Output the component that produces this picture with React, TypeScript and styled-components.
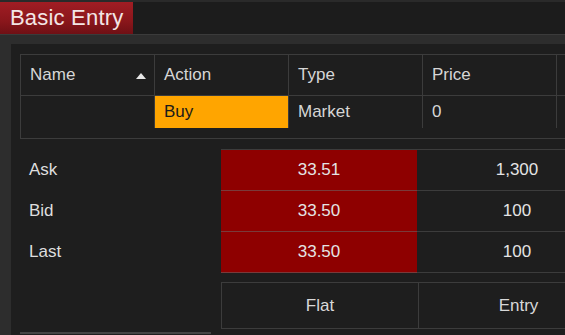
import React from 'react';
import styled, { createGlobalStyle } from 'styled-components';

const GlobalStyle = createGlobalStyle`
  html, body {
    margin: 0;
    padding: 0;
    overflow: hidden;
    background: #1c1c1c;
    font-family: "Liberation Sans", Arial, sans-serif;
  }
`;

const Page = styled.div`
  width: 565px;
  height: 335px;
  overflow: hidden;
  display: flex;
  flex-direction: column;
  background: #1c1c1c;
`;

const TitleBar = styled.div`
  flex-shrink: 0;
  height: 32px;
  border-top: 2px solid #2a2a2a;
  display: flex;
`;

const Tab = styled.div`
  width: 123px;
  padding-left: 10px;
  display: flex;
  align-items: center;
  background: linear-gradient(#a11d24, #8a161b 60%, #6f1015);
  color: #f3e6e6;
  font-size: 22px;
  letter-spacing: 0.2px;
`;

const Frame = styled.div`
  flex: 1 0 auto;
  border-top: 1px solid #3b3b3b;
  background: #2d2d2d;
  padding: 9px 0 0 11px;
  display: flex;
`;

const Panel = styled.div`
  flex: 1;
  background: #1e1e1e;
  padding: 10px 0 0 9px;
  display: flex;
  flex-direction: column;
`;

const OrderTable = styled.div`
  width: 640px;
  height: 83px;
  border: 1px solid #3c3c3c;
  border-right: none;
`;

const Row = styled.div<{ $h: number; $line?: boolean }>`
  display: grid;
  grid-template-columns: 134px 134px 134px 134px 1fr;
  height: ${(p) => p.$h}px;
  border-bottom: ${(p) => (p.$line ? '1px solid #3c3c3c' : 'none')};
`;

const Cell = styled.div<{ $hl?: boolean; $last?: boolean }>`
  display: flex;
  align-items: center;
  justify-content: space-between;
  padding: 0 8px 0 9px;
  border-right: ${(p) => (p.$last ? 'none' : '1px solid #3c3c3c')};
  background: ${(p) => (p.$hl ? '#ffa500' : 'transparent')};
  color: ${(p) => (p.$hl ? '#1a1a1a' : '#d6d6d6')};
  font-size: 17px;
`;

const SortUp = styled.span`
  width: 0;
  height: 0;
  border-left: 5px solid transparent;
  border-right: 5px solid transparent;
  border-bottom: 6px solid #e6e6e6;
  margin-top: 1px;
`;

const Lower = styled.div`
  display: flex;
  gap: 10px;
  margin-top: 10px;
`;

const LabelCol = styled.div`
  width: 191px;
  display: flex;
  flex-direction: column;
`;

const Label = styled.div`
  height: 41px;
  display: flex;
  align-items: center;
  padding-left: 9px;
  color: #dedede;
  font-size: 17px;
`;

const LeftFooter = styled.div`
  margin-top: 60px;
  height: 10px;
  border-top: 2px solid #444;
`;

const RightCol = styled.div`
  display: flex;
  flex-direction: column;
`;

const Quotes = styled.div`
  display: grid;
  grid-template-columns: 196px 200px;
  border-top: 1px solid #3c3c3c;
`;

const QuoteCell = styled.div<{ $red?: boolean }>`
  height: 40px;
  display: flex;
  align-items: center;
  justify-content: center;
  font-size: 17px;
  color: #e4e4e4;
  background: ${(p) => (p.$red ? '#8e0000' : 'transparent')};
  border-bottom: 1px solid ${(p) => (p.$red ? '#7a3a3a' : '#3c3c3c')};
`;

const Modes = styled.div`
  margin-top: 9px;
  display: grid;
  grid-template-columns: 196px 200px;
  height: 45px;
  border-top: 1px solid #3c3c3c;
  border-bottom: 1px solid #3c3c3c;
  border-left: 1px solid #3c3c3c;
`;

const ModeCell = styled.div<{ $sep?: boolean }>`
  display: flex;
  align-items: center;
  justify-content: center;
  font-size: 17px;
  color: #d8d8d8;
  border-left: ${(p) => (p.$sep ? '1px solid #3c3c3c' : 'none')};
`;

const quotes = [
  { label: 'Ask', price: '33.51', size: '1,300' },
  { label: 'Bid', price: '33.50', size: '100' },
  { label: 'Last', price: '33.50', size: '100' },
];

export default function App() {
  return (
    <Page>
      <GlobalStyle />
      <TitleBar>
        <Tab>Basic Entry</Tab>
      </TitleBar>
      <Frame>
        <Panel>
          <OrderTable>
            <Row $h={40} $line>
              <Cell>
                Name <SortUp />
              </Cell>
              <Cell>Action</Cell>
              <Cell>Type</Cell>
              <Cell>Price</Cell>
              <Cell $last />
            </Row>
            <Row $h={32}>
              <Cell />
              <Cell $hl>Buy</Cell>
              <Cell>Market</Cell>
              <Cell>0</Cell>
              <Cell $last />
            </Row>
          </OrderTable>
          <Lower>
            <LabelCol>
              {quotes.map((q) => (
                <Label key={q.label}>{q.label}</Label>
              ))}
              <LeftFooter />
            </LabelCol>
            <RightCol>
              <Quotes>
                {quotes.map((q) => (
                  <React.Fragment key={q.label}>
                    <QuoteCell $red>{q.price}</QuoteCell>
                    <QuoteCell>{q.size}</QuoteCell>
                  </React.Fragment>
                ))}
              </Quotes>
              <Modes>
                <ModeCell>Flat</ModeCell>
                <ModeCell $sep>Entry</ModeCell>
              </Modes>
            </RightCol>
          </Lower>
        </Panel>
      </Frame>
    </Page>
  );
}
